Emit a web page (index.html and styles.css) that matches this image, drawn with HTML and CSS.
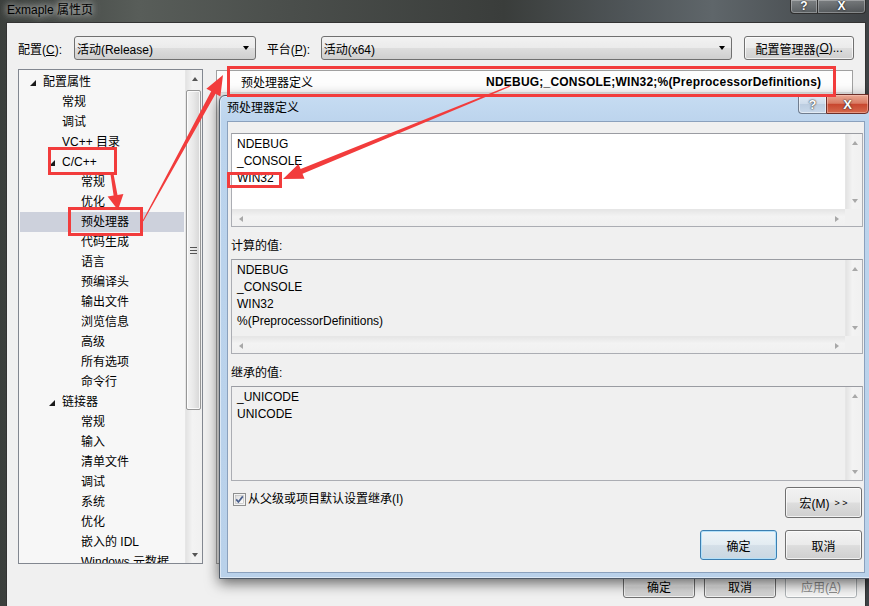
FILE: index.html
```html
<!DOCTYPE html>
<html lang="zh-CN">
<head>
<meta charset="utf-8">
<title>Exmaple 属性页</title>
<link rel="stylesheet" href="styles.css">
</head>
<body>
<div class="screen">
  <div class="titlebar">
    <span class="title">Exmaple 属性页</span>
    <div class="wcaps"><span class="wcap whelp">?</span><span class="wcap wclose">X</span></div>
  </div>

  <div class="client">
    <div class="toolbar">
      <span class="lbl lbl1">配置(<u>C</u>):</span>
      <div class="combo combo1"><span>活动(Release)</span><i class="dd"></i></div>
      <span class="lbl lbl2">平台(<u>P</u>):</span>
      <div class="combo combo2"><span>活动(x64)</span><i class="dd"></i></div>
      <div class="btn mgr">配置管理器(<u>O</u>)...</div>
    </div>

    <div class="main">
      <div class="tree">
        <div class="tree-list">
          <div class="row l0"><i class="tri"></i>配置属性</div>
          <div class="row l1"><i class="notri"></i>常规</div>
          <div class="row l1"><i class="notri"></i>调试</div>
          <div class="row l1"><i class="notri"></i>VC++ 目录</div>
          <div class="row l1"><i class="tri"></i>C/C++</div>
          <div class="row l2"><i class="notri"></i>常规</div>
          <div class="row l2"><i class="notri"></i>优化</div>
          <div class="row l2 sel"><i class="notri"></i>预处理器</div>
          <div class="row l2"><i class="notri"></i>代码生成</div>
          <div class="row l2"><i class="notri"></i>语言</div>
          <div class="row l2"><i class="notri"></i>预编译头</div>
          <div class="row l2"><i class="notri"></i>输出文件</div>
          <div class="row l2"><i class="notri"></i>浏览信息</div>
          <div class="row l2"><i class="notri"></i>高级</div>
          <div class="row l2"><i class="notri"></i>所有选项</div>
          <div class="row l2"><i class="notri"></i>命令行</div>
          <div class="row l1"><i class="tri"></i>链接器</div>
          <div class="row l2"><i class="notri"></i>常规</div>
          <div class="row l2"><i class="notri"></i>输入</div>
          <div class="row l2"><i class="notri"></i>清单文件</div>
          <div class="row l2"><i class="notri"></i>调试</div>
          <div class="row l2"><i class="notri"></i>系统</div>
          <div class="row l2"><i class="notri"></i>优化</div>
          <div class="row l2"><i class="notri"></i>嵌入的 IDL</div>
          <div class="row l2"><i class="notri"></i>Windows 元数据</div>
        </div>
        <div class="vscroll tree-scroll">
          <div class="sbtn"><i class="au"></i></div>
          <div class="track"><div class="thumb"><i class="grip"></i></div></div>
          <div class="sbtn"><i class="ad"></i></div>
        </div>
      </div>

      <div class="grid">
        <div class="grow">
          <span class="gname">预处理器定义</span>
          <span class="gval">NDEBUG;_CONSOLE;WIN32;%(PreprocessorDefinitions)</span>
        </div>
      </div>
    </div>

    <div class="footer">
      <div class="btn fbtn">确定</div>
      <div class="btn fbtn">取消</div>
      <div class="btn fbtn disabled">应用(<u>A</u>)</div>
    </div>
  </div>

  <div class="dialog">
    <div class="dtitle">
      <span class="dtext">预处理器定义</span>
      <div class="dcaps"><span class="dcap dhelp">?</span><span class="dcap dclose">X</span></div>
    </div>
    <div class="dclient">
      <div class="box box1 white">
        <div class="btext">NDEBUG<br>_CONSOLE<br>WIN32</div>
        <div class="vscroll"><div class="sbtn"><i class="au dis"></i></div><div class="track"></div><div class="sbtn"><i class="ad dis"></i></div></div>
        <div class="hscroll"><div class="sbtn"><i class="al dis"></i></div><div class="htrack"></div><div class="sbtn"><i class="ar dis"></i></div></div>
        <div class="corner"></div>
      </div>
      <div class="dlabel">计算的值:</div>
      <div class="box box2">
        <div class="btext">NDEBUG<br>_CONSOLE<br>WIN32<br>%(PreprocessorDefinitions)</div>
        <div class="vscroll"><div class="sbtn"><i class="au dis"></i></div><div class="track"></div><div class="sbtn"><i class="ad dis"></i></div></div>
        <div class="hscroll"><div class="sbtn"><i class="al dis"></i></div><div class="htrack"></div><div class="sbtn"><i class="ar dis"></i></div></div>
        <div class="corner"></div>
      </div>
      <div class="dlabel">继承的值:</div>
      <div class="box box3">
        <div class="btext">_UNICODE<br>UNICODE</div>
        <div class="vscroll"><div class="sbtn"><i class="au dis"></i></div><div class="track"></div><div class="sbtn"><i class="ad dis"></i></div></div>
      </div>
      <div class="checkrow">
        <div class="check">
          <svg class="cbox" width="13" height="13" viewBox="0 0 13 13">
            <defs><linearGradient id="cg" x1="0" y1="0" x2="1" y2="1"><stop offset="0" stop-color="#dcdcdc"/><stop offset="1" stop-color="#ffffff"/></linearGradient></defs>
            <rect x="0.5" y="0.5" width="12" height="12" fill="#f4f4f4" stroke="#8e8f8f"/>
            <rect x="2.5" y="2.5" width="8" height="8" fill="url(#cg)" stroke="#b8b8b8" stroke-width="0.6"/>
            <path d="M3.2 6.4 L5.4 9 L9.8 3.4" fill="none" stroke="#4a5f8c" stroke-width="1.7"/>
          </svg>
          <span>从父级或项目默认设置继承(I)</span>
        </div>
        <div class="btn macro">宏(M) <span class="gt">&gt; &gt;</span></div>
      </div>
      <div class="okrow">
        <div class="btn dbtn ok">确定</div>
        <div class="btn dbtn">取消</div>
      </div>
    </div>
  </div>

  <svg class="annot" width="869" height="606" viewBox="0 0 869 606">
    <g fill="none" stroke="#f23c3c" stroke-width="3">
      <rect x="49.5" y="148.5" width="66" height="25"/>
      <rect x="69.5" y="208.5" width="72" height="26"/>
      <rect x="228.5" y="67.5" width="606" height="28"/>
      <rect x="228.5" y="173.5" width="52" height="13"/>
    </g>
    <g fill="#f23c3c">
      <polygon points="110.5,174.3 113.6,195.5 107.6,196.5 118,210 123.4,193.9 117.5,194.9 113.5,173.8"/>
      <polygon points="143.4,221.2 215.6,93.7 220.4,96.4 223,75 206.4,88.7 211.2,91.3 142.6,220.8"/>
      <polygon points="509.8,85.4 300.6,169.1 298.5,164 283,179 304.5,178.8 302.5,173.7 510.2,86.6"/>
    </g>
  </svg>
</div>
</body>
</html>
```

FILE: styles.css
```css
* { box-sizing: border-box; }
html, body { margin: 0; padding: 0; }
body {
  width: 869px; height: 606px; overflow: hidden;
  font-family: "Liberation Sans", "Noto Sans CJK SC", sans-serif;
  font-size: 12px; color: #000;
}
u { text-decoration: underline; }
i { display: block; font-style: normal; }

.screen {
  position: relative; width: 869px; height: 606px; overflow: hidden;
  background: linear-gradient(90deg, #3b3f3c 0%, #585d59 16%, #4b4f4c 32%, #3a3d3b 58%, #4f5558 72%, #5f666a 82%, #3e4245 100%);
}

/* main window title */
.titlebar { height: 22px; display: flex; justify-content: space-between; align-items: flex-start; padding-left: 7px; }
.title { line-height: 21px; color: #000; text-shadow: 0 0 6px #d8d8d8, 0 0 10px #c8c8c8; }
.wcaps { display: flex; margin-right: 3px; }
.wcap {
  height: 14px; border: 1px solid #2e2e2e; border-top: none;
  background: linear-gradient(rgba(255,255,255,.28), rgba(255,255,255,.08));
  box-shadow: inset 0 0 0 1px rgba(255,255,255,.3);
  color: #fff; font-weight: bold; font-size: 12px; line-height: 12px; text-align: center;
  text-shadow: 0 0 2px #000;
}
.whelp { width: 28px; border-radius: 0 0 0 4px; }
.wclose { width: 48px; border-left: none; border-radius: 0 0 4px 0; }

/* main window client */
.client {
  margin-left: 6px; width: 860px; height: 584px;
  background: #f0f0f0; border: 1px solid #333; border-bottom: none;
  padding: 13px 11px 0 11px;
}
.toolbar { display: flex; align-items: center; height: 24px; }
.lbl { white-space: nowrap; }
.lbl1 { width: 56px; }
.lbl2 { width: 54px; margin-left: 11px; }
.combo {
  height: 24px; border: 1px solid #707070; border-radius: 3px;
  background: linear-gradient(#f2f2f2 0%, #ebebeb 48%, #dddddd 52%, #cfcfcf 100%);
  display: flex; align-items: center; justify-content: space-between;
  padding: 0 6px 0 2px;
}
.combo1 { width: 182px; }
.combo2 { width: 412px; }
.dd { width: 0; height: 0; border-left: 3.5px solid transparent; border-right: 3.5px solid transparent; border-top: 4px solid #000; }

.btn {
  border: 1px solid #707070; border-radius: 3px;
  background: linear-gradient(#f2f2f2 0%, #ebebeb 48%, #dddddd 52%, #cfcfcf 100%);
  box-shadow: inset 0 0 0 1px rgba(255,255,255,.7);
  display: flex; align-items: center; justify-content: center; white-space: nowrap;
}
.mgr { width: 110px; height: 24px; margin-left: 12px; }

.main { display: flex; gap: 13px; margin-top: 9px; height: 495px; }
.tree { width: 185px; border: 1px solid #828790; background: #f7f7f7; display: flex; }
.tree-list { flex: 1; padding-top: 2px; overflow: hidden; }
.row { height: 20px; line-height: 20px; display: flex; align-items: center; white-space: nowrap; margin-right: 1px; }
.row.l0 { padding-left: 11px; }
.row.l1 { padding-left: 30px; }
.row.l2 { padding-left: 49px; }
.row.sel { background: #cdd1dc; margin-left: 1px; padding-left: 48px; }
.tri { width: 13px; height: 20px; position: relative; }
.tri::before {
  content: ""; position: absolute; left: 0; top: 8px; width: 0; height: 0;
  border-left: 6px solid transparent; border-bottom: 6px solid #1a1a1a;
}
.notri { width: 13px; height: 20px; }

.vscroll { width: 17px; display: flex; flex-direction: column; background: linear-gradient(90deg, #e3e3e3, #f3f3f3 40%, #f0f0f0); border-left: 1px solid #e6e6e6; }
.sbtn { width: 17px; height: 17px; flex: none; display: flex; align-items: center; justify-content: center; }
.track { flex: 1; display: flex; flex-direction: column; }
.tree-scroll .track { padding-top: 3px; }
.thumb {
  width: 15px; height: 320px; margin-left: 0; border: 1px solid #979797; border-radius: 2px;
  background: linear-gradient(90deg, #f4f4f4, #e8e8e8 50%, #d6d6d6);
  box-shadow: inset 0 0 0 1px rgba(255,255,255,.8);
  display: flex; align-items: center; justify-content: center;
}
.grip { width: 7px; height: 7px; border-top: 1px solid #555; border-bottom: 1px solid #555; position: relative; }
.grip::before { content: ""; position: absolute; left: 0; right: 0; top: 2px; height: 1px; background: #555; }
.au { width: 0; height: 0; border-left: 3.5px solid transparent; border-right: 3.5px solid transparent; border-bottom: 4px solid #555; }
.ad { width: 0; height: 0; border-left: 3.5px solid transparent; border-right: 3.5px solid transparent; border-top: 4px solid #555; }
.al { width: 0; height: 0; border-top: 3.5px solid transparent; border-bottom: 3.5px solid transparent; border-right: 4px solid #a8a8a8; }
.ar { width: 0; height: 0; border-top: 3.5px solid transparent; border-bottom: 3.5px solid transparent; border-left: 4px solid #a8a8a8; }
.au.dis { border-bottom-color: #a8a8a8; }
.ad.dis { border-top-color: #a8a8a8; }

.grid { width: 637px; margin-top: 1px; border: 1px solid #a0a0a0; background: #f0f0f0; }
.grow { height: 22px; display: flex; align-items: center; background: #fdfdfd; border-bottom: 1px solid #e4e4e4; }
.gname { width: 269px; padding-left: 24px; }
.gval { font-weight: bold; white-space: nowrap; letter-spacing: 0.22px; }

.footer { display: flex; justify-content: flex-end; gap: 9px; margin-top: 11px; margin-right: -3px; }
.fbtn { width: 72px; height: 23px; }
.fbtn.disabled { color: #8d8d8d; border-color: #adb2b5; background: #f4f4f4; }

/* dialog window */
.dialog {
  position: absolute; left: 219px; top: 95px; width: 655px; height: 484px;
  border: 1px solid #4f5a68; border-radius: 6px 6px 0 0;
  background: linear-gradient(#c6dcf2 0px, #bcd4ed 26px, #b9d1ea 100%);
  padding: 0 8px 6px 7px;
  display: flex; flex-direction: column;
  box-shadow: 0 4px 14px rgba(0,0,0,.6), inset 0 0 0 1px rgba(255,255,255,.5);
}
.dtitle { height: 25px; flex: none; display: flex; justify-content: space-between; align-items: flex-start; }
.dtext { line-height: 25px; color: #000; }
.dcaps { display: flex; margin-top: -2px; margin-right: -4px; }
.dcap {
  height: 20px; text-align: center; color: #fff; font-weight: bold; font-size: 13px; line-height: 19px;
  text-shadow: 0 0 1px #333, 0 0 2px #333;
}
.dhelp {
  width: 28px; border: 1px solid #707d8f; border-right: none; border-radius: 0 0 0 4px;
  background: linear-gradient(#e2ebf5 0%, #cfdceb 48%, #bccde0 52%, #c8d8ea 100%);
  box-shadow: inset 0 0 0 1px rgba(255,255,255,.5);
}
.dclose {
  width: 43px; border: 1px solid #6d2f29; border-radius: 0 0 4px 0;
  background: linear-gradient(#eaa995 0%, #d97b63 46%, #c8472f 52%, #d56a4d 100%);
  box-shadow: inset 0 0 0 1px rgba(255,210,200,.45);
}
.dclient {
  width: 638px; height: 452px; flex: none;
  background: #f0f0f0; border: 1px solid #8ba1bd;
  padding: 11px 1px 0 3px;
  display: flex; flex-direction: column;
}
.box {
  width: 632px; border: 1px solid #abadb3; border-top-color: #9a9ca2;
  display: grid; grid-template-columns: 1fr 17px; background: #f0f0f0;
}
.box.white { background: #fff; }
.box1 { height: 94px; grid-template-rows: 1fr 17px; }
.box2 { height: 95px; grid-template-rows: 1fr 17px; }
.box3 { height: 95px; grid-template-rows: 1fr; }
.btext { padding: 2px 5px 0; line-height: 17px; white-space: nowrap; overflow: hidden; }
.hscroll { display: flex; background: linear-gradient(#e6e6e6, #f3f3f3 40%, #f0f0f0); border-top: 1px solid #e6e6e6; }
.htrack { flex: 1; }
.corner { background: #f0f0f0; }
.dlabel { padding-top: 11px; line-height: 16px; height: 32px; flex: none; }

.checkrow { display: flex; justify-content: space-between; align-items: flex-start; margin-top: 6px; padding-right: 1px; }
.check { display: flex; align-items: center; gap: 2px; margin-top: 4px; margin-left: 2px; line-height: 16px; }
.cbox { flex: none; }
.macro { width: 77px; height: 31px; }
.gt { font-size: 9px; margin-left: 5px; }
.okrow { display: flex; justify-content: flex-end; gap: 8px; margin-top: 12px; padding-right: 1px; }
.dbtn { width: 77px; height: 30px; }
.ok {
  border-color: #3c7fb1;
  background: linear-gradient(#eef4f8 0%, #e3ecf2 48%, #d4dfe8 52%, #c9d7e2 100%);
  box-shadow: inset 0 0 0 1px #b3e0f9;
}

.annot { position: absolute; left: 0; top: 0; pointer-events: none; }
```
